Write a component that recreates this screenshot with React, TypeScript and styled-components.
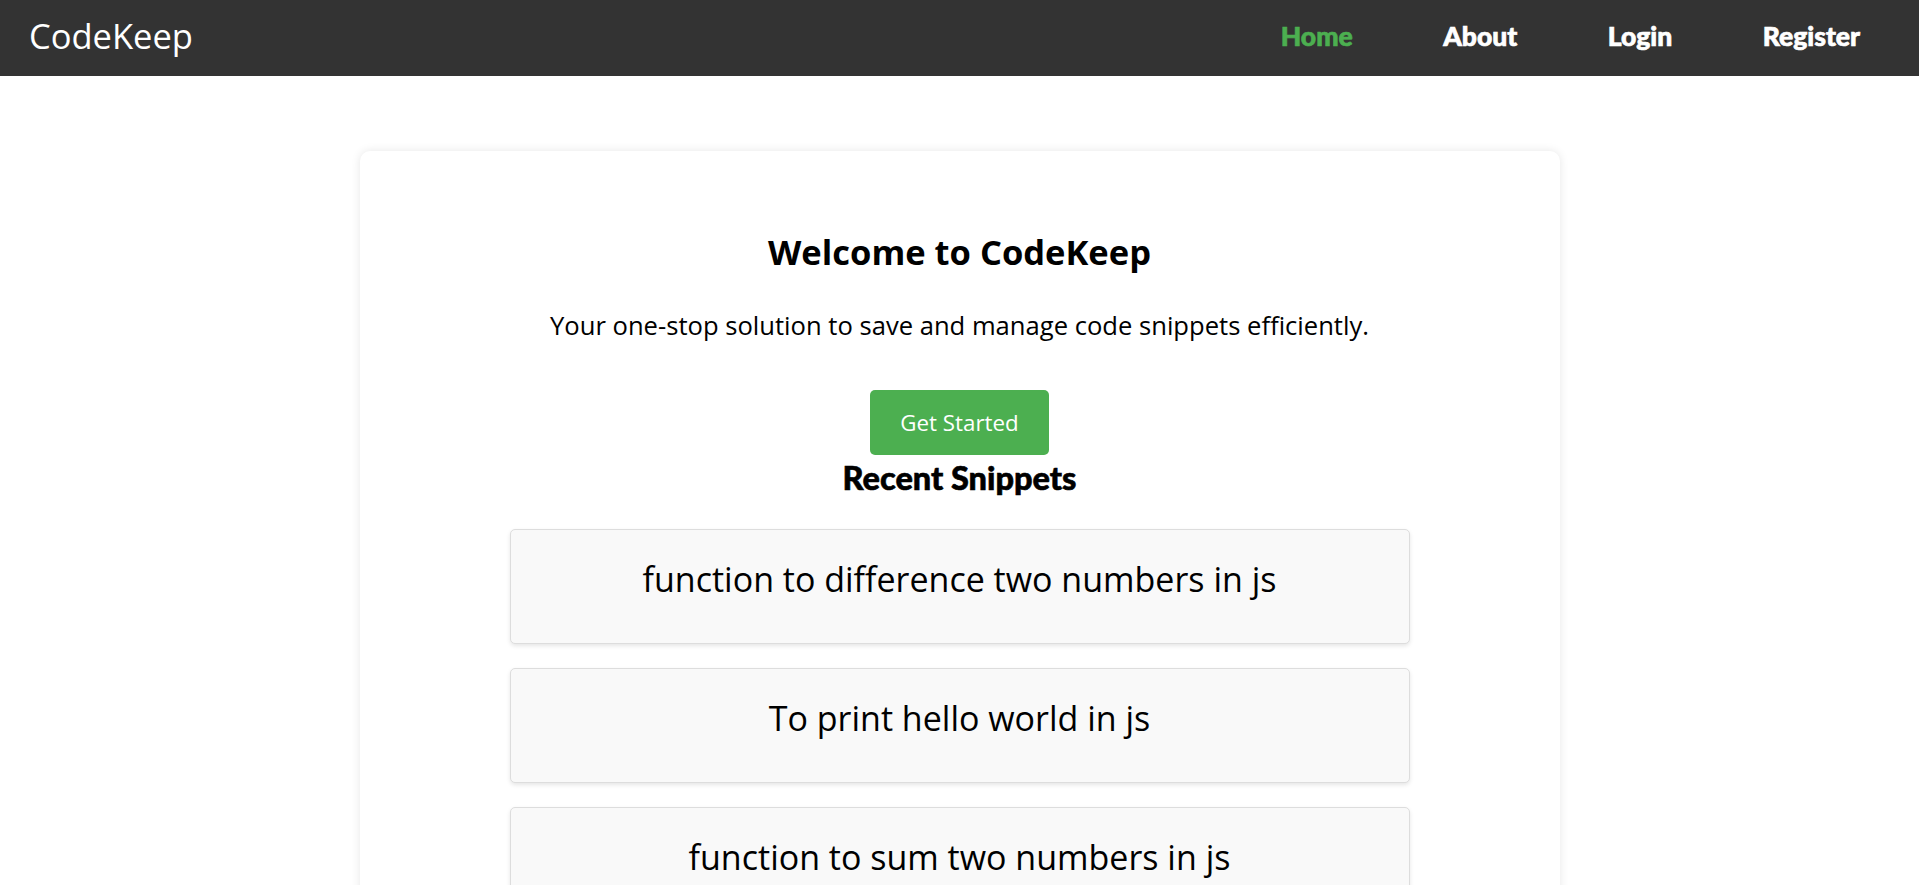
import React from "react";
import styled, { createGlobalStyle } from "styled-components";

const GlobalStyle = createGlobalStyle`
  body {
    margin: 0;
    background: #ffffff;
    font-family: "Open Sans", "Noto Sans", sans-serif;
    color: #000;
  }
`;

const NavBar = styled.nav`
  box-sizing: border-box;
  height: 76px;
  background: #333333;
  display: flex;
  align-items: center;
  justify-content: space-between;
  padding: 0 59px 5px 29px;
`;

const Logo = styled.div`
  color: #ffffff;
  font-size: 34.5px;
  line-height: 40px;
  font-weight: 400;
`;

const NavLinks = styled.div`
  display: flex;
  align-items: center;
  gap: 90.5px;
`;

const NavLink = styled.a<{ $active?: boolean }>`
  font-family: "Lato", "Open Sans", sans-serif;
  font-weight: 900;
  font-size: 26.5px;
  color: ${(p) => (p.$active ? "#4caf50" : "#ffffff")};
  -webkit-text-stroke: 0.7px currentColor;
  text-decoration: none;
  cursor: pointer;
`;

const Card = styled.main`
  max-width: 1200px;
  margin: 75px auto 0;
  background: #ffffff;
  border-radius: 10px;
  box-shadow: 0 0 10px rgba(0, 0, 0, 0.1);
  padding: 79px 0 40px;
  display: flex;
  flex-direction: column;
  align-items: center;
  text-align: center;
`;

const Title = styled.h1`
  margin: 0;
  font-size: 34.5px;
  line-height: 44px;
  font-weight: 700;
`;

const Subtitle = styled.p`
  margin: 36px 0 0;
  font-size: 25.6px;
  line-height: 32px;
`;

const StartButton = styled.button`
  margin-top: 48px;
  background: #4caf50;
  color: #ffffff;
  border: none;
  border-radius: 5px;
  font-family: "Open Sans", sans-serif;
  font-size: 22.3px;
  line-height: 27px;
  padding: 19px 30px;
  cursor: pointer;
`;

const SectionTitle = styled.h2`
  margin: 7px 0 0;
  font-family: "Lato", "Open Sans", sans-serif;
  font-weight: 900;
  font-size: 32.5px;
  line-height: 32px;
  -webkit-text-stroke: 0.6px currentColor;
`;

const SnippetList = styled.div`
  margin-top: 35px;
  width: 900px;
  display: flex;
  flex-direction: column;
  gap: 24px;
`;

const SnippetCard = styled.div`
  box-sizing: border-box;
  height: 115px;
  display: flex;
  align-items: center;
  justify-content: center;
  background: #f9f9f9;
  border: 1px solid #dddddd;
  border-radius: 5px;
  box-shadow: 0 2px 4px rgba(0, 0, 0, 0.1);
`;

const SnippetTitle = styled.h3`
  margin: 0 0 15px;
  font-size: 34px;
  line-height: 44px;
  font-weight: 400;
`;

const snippets = [
  "function to difference two numbers in js",
  "To print hello world in js",
  "function to sum two numbers in js",
];

export default function App() {
  return (
    <>
      <GlobalStyle />
      <NavBar>
        <Logo>CodeKeep</Logo>
        <NavLinks>
          <NavLink $active>Home</NavLink>
          <NavLink>About</NavLink>
          <NavLink>Login</NavLink>
          <NavLink>Register</NavLink>
        </NavLinks>
      </NavBar>
      <Card>
        <Title>Welcome to CodeKeep</Title>
        <Subtitle>Your one-stop solution to save and manage code snippets efficiently.</Subtitle>
        <StartButton>Get Started</StartButton>
        <SectionTitle>Recent Snippets</SectionTitle>
        <SnippetList>
          {snippets.map((s) => (
            <SnippetCard key={s}>
              <SnippetTitle>{s}</SnippetTitle>
            </SnippetCard>
          ))}
        </SnippetList>
      </Card>
    </>
  );
}
